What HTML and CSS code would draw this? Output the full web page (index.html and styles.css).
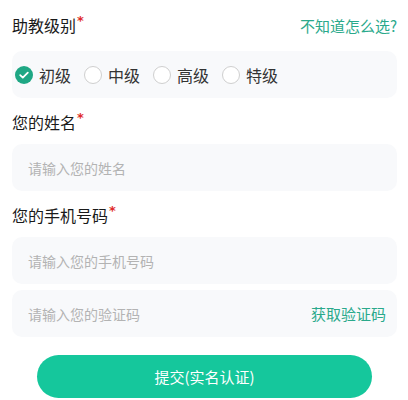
FILE: index.html
```html
<!DOCTYPE html>
<html lang="zh-CN">
<head>
    <meta charset="UTF-8">
    <meta name="viewport" content="width=device-width, initial-scale=1.0">
    <title>实名认证</title>
    <link rel="stylesheet" href="styles.css">
</head>
<body>
    <form class="form">
        <div class="label-row">
            <span class="label">助教级别<i class="star">*</i></span>
            <a class="help" href="">不知道怎么选?</a>
        </div>
        <div class="radio-box">
            <label class="radio checked"><span class="dot">
                <svg viewBox="0 0 18 18" width="18" height="18"><circle cx="9" cy="9" r="9" fill="#1fa784"/><path d="M5.2 9.2 L7.8 11.6 L12.8 6.6" fill="none" stroke="#fff" stroke-width="1.8" stroke-linecap="round" stroke-linejoin="round"/></svg>
            </span>初级</label>
            <label class="radio"><span class="dot"></span>中级</label>
            <label class="radio"><span class="dot"></span>高级</label>
            <label class="radio"><span class="dot"></span>特级</label>
        </div>

        <div class="label-row">
            <span class="label">您的姓名<i class="star">*</i></span>
        </div>
        <div class="field">
            <input class="input" type="text" placeholder="请输入您的姓名">
        </div>

        <div class="label-row">
            <span class="label">您的手机号码<i class="star">*</i></span>
        </div>
        <div class="field">
            <input class="input" type="tel" placeholder="请输入您的手机号码">
        </div>
        <div class="field code">
            <input class="input" type="text" placeholder="请输入您的验证码">
            <span class="get-code">获取验证码</span>
        </div>

        <button type="submit" class="submit">提交(实名认证)</button>
    </form>
</body>
</html>
```

FILE: styles.css
```css
body {
    margin: 0;
    background-color: #fff;
    font-family: "Noto Sans CJK SC", "Noto Sans", sans-serif;
    color: #1a1a1a;
}
.form {
    display: flex;
    flex-direction: column;
    padding: 12px 11px 0 12px;
}
.label-row {
    display: flex;
    justify-content: space-between;
    align-items: center;
    height: 26px;
}
.label {
    font-size: 16px;
    line-height: 26px;
}
.star {
    font-style: normal;
    font-family: "DejaVu Sans", sans-serif;
    font-weight: bold;
    color: #e02a2a;
    font-size: 13px;
    vertical-align: top;
    line-height: 18px;
    margin-left: 1px;
}
.help {
    color: #2aa98b;
    font-size: 15px;
    text-decoration: none;
}
.radio-box {
    display: flex;
    align-items: center;
    gap: 13px;
    height: 47px;
    margin-top: 13px;
    padding-left: 3px;
    background-color: #f8f9fb;
    border-radius: 10px;
}
.radio {
    display: flex;
    align-items: center;
    gap: 6px;
    font-size: 16px;
    color: #333;
}
.dot {
    width: 18px;
    height: 18px;
    box-sizing: border-box;
    border: 1px solid #cfcfcf;
    border-radius: 50%;
    background-color: #fff;
}
.radio.checked .dot {
    border: none;
    background: none;
}
.dot svg {
    display: block;
}
.radio-box + .label-row {
    margin-top: 11px;
}
.field + .label-row {
    margin-top: 11px;
}
.label-row + .field {
    margin-top: 9px;
}
.field {
    display: flex;
    align-items: center;
    height: 47px;
    background-color: #f8f9fb;
    border-radius: 10px;
    padding: 0 11px 0 16px;
}
.field + .field {
    margin-top: 6px;
}
.input {
    flex: 1;
    border: none;
    outline: none;
    background: transparent;
    font-family: inherit;
    font-size: 14px;
    padding: 0;
    color: #333;
}
.input::placeholder {
    color: #b3b3b3;
}
.get-code {
    color: #2aa98b;
    font-size: 15px;
}
.submit {
    align-self: center;
    width: 335px;
    height: 43px;
    margin-top: 18px;
    border: none;
    border-radius: 22px;
    background-color: #15c79c;
    color: #fff;
    font-family: inherit;
    font-size: 15px;
}
```
